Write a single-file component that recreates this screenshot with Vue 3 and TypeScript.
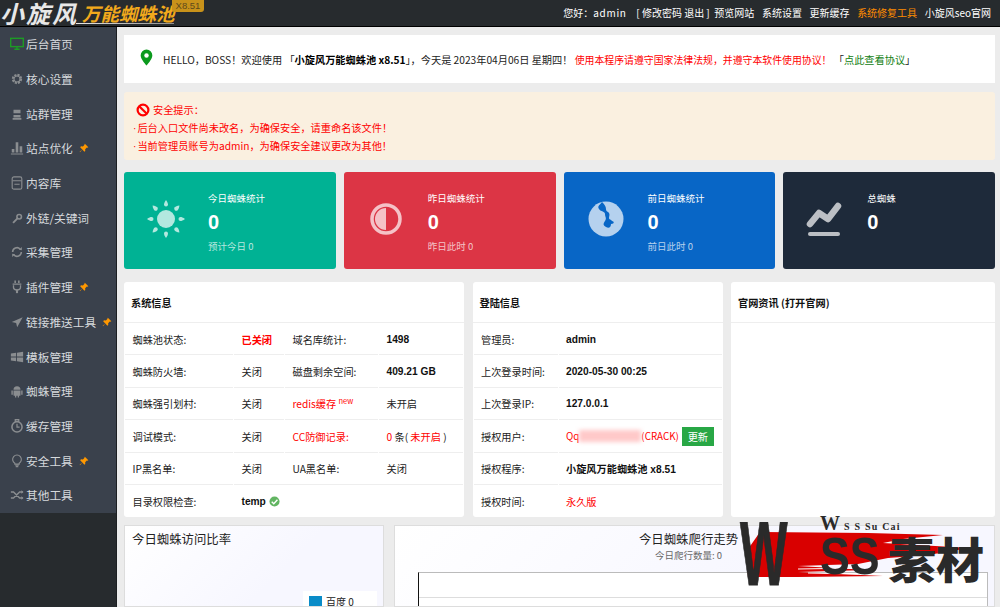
<script setup lang="ts">
interface MenuItem {
  label: string
  icon: string
  pin?: boolean
  active?: boolean
}

const menu: MenuItem[] = [
  { label: '后台首页', icon: 'monitor', active: true },
  { label: '核心设置', icon: 'gear' },
  { label: '站群管理', icon: 'server' },
  { label: '站点优化', icon: 'bars', pin: true },
  { label: '内容库', icon: 'doc' },
  { label: '外链/关键词', icon: 'key' },
  { label: '采集管理', icon: 'sync' },
  { label: '插件管理', icon: 'plug', pin: true },
  { label: '链接推送工具', icon: 'send', pin: true },
  { label: '模板管理', icon: 'windows' },
  { label: '蜘蛛管理', icon: 'android' },
  { label: '缓存管理', icon: 'clock' },
  { label: '安全工具', icon: 'bulb', pin: true },
  { label: '其他工具', icon: 'shuffle' },
]

const stats = [
  { cls: 'teal', title: '今日蜘蛛统计', sub: '预计今日 0', icon: 'sun' },
  { cls: 'red', title: '昨日蜘蛛统计', sub: '昨日此时 0', icon: 'half' },
  { cls: 'blue', title: '前日蜘蛛统计', sub: '前日此时 0', icon: 'globe' },
  { cls: 'dark', title: '总蜘蛛', sub: '', icon: 'trend' },
]

const sunRays = [0, 45, 90, 135, 180, 225, 270, 315]
</script>

<template>
  <div class="page">
    <header class="topbar">
      <div class="logo">
        <span class="logo-main">小旋风</span><span class="logo-sub">万能蜘蛛池</span>
        <span class="logo-ver">X8.51</span>
        <i class="logo-line"></i>
      </div>
      <nav class="topnav">
        <span class="hello">您好&#xFF1A;<em>admin</em></span>
        <span class="account">[ 修改密码 退出 ]</span>
        <a>预览网站</a>
        <a>系统设置</a>
        <a>更新缓存</a>
        <a class="orange">系统修复工具</a>
        <a>小旋风seo官网</a>
      </nav>
    </header>

    <div class="body">
      <aside class="sidebar">
        <ul class="menu">
          <li v-for="m in menu" :key="m.label">
            <svg class="micon" :class="{ on: m.active }" viewBox="0 0 16 16">
              <template v-if="m.icon === 'monitor'">
                <rect x="0.8" y="1.5" width="14.4" height="9.5" fill="none" stroke="currentColor" stroke-width="1.6" />
                <path d="M5 14h6M8 11v3" stroke="currentColor" stroke-width="1.6" fill="none" />
              </template>
              <template v-else-if="m.icon === 'gear'">
                <circle cx="8" cy="8" r="4.6" fill="none" stroke="currentColor" stroke-width="2.6" stroke-dasharray="2.4 1.2" />
                <circle cx="8" cy="8" r="3.4" fill="none" stroke="currentColor" stroke-width="1.2" />
              </template>
              <template v-else-if="m.icon === 'server'">
                <path d="M4 3h8v4H4zM4 9h8v3H4zM3 12.500h10v2H3z" fill="currentColor" />
              </template>
              <template v-else-if="m.icon === 'bars'">
                <path d="M2 9h3v4H2zM6.500 1.500h3V13h-3zM11 6h3v7h-3zM1 14.300h14v1H1z" fill="currentColor" />
              </template>
              <template v-else-if="m.icon === 'doc'">
                <rect x="2.5" y="1" width="11" height="14" rx="2" fill="none" stroke="currentColor" stroke-width="1.3" />
                <path d="M3 5.500h10M5 9.500h6" stroke="currentColor" stroke-width="1.2" />
              </template>
              <template v-else-if="m.icon === 'key'">
                <circle cx="10.500" cy="6.500" r="2.600" fill="none" stroke="currentColor" stroke-width="1.800" />
                <path d="M8.500 8.500l-5 5" stroke="currentColor" stroke-width="2.200" />
              </template>
              <template v-else-if="m.icon === 'sync'">
                <path d="M3 8a5 5 0 0 1 8.500-3.500M13 8a5 5 0 0 1-8.500 3.500" fill="none" stroke="currentColor" stroke-width="1.800" />
                <path d="M10 5.500l3.500 .5V2.200zM6 10.500l-3.500-.5v3.800z" fill="currentColor" />
              </template>
              <template v-else-if="m.icon === 'plug'">
                <path d="M5 .5h1.800v3H5zM9.200 .5H11v3H9.200zM3 4h10v1.500H3z" fill="currentColor" />
                <path d="M4 6v2.500a4 2.800 0 0 0 8 0V6" fill="none" stroke="currentColor" stroke-width="1.500" />
                <path d="M8 11v4" stroke="currentColor" stroke-width="2.400" />
              </template>
              <template v-else-if="m.icon === 'send'">
                <path d="M14.500 2.500L2 8l5 1.200L8.200 14z" fill="currentColor" />
              </template>
              <template v-else-if="m.icon === 'windows'">
                <path d="M1 4l6-.8V7.500H1zM8 3.100l7-1V7.500H8zM1 8.500h6v4.300L1 12zM8 8.500h7v5.400l-7-1z" fill="currentColor" />
              </template>
              <template v-else-if="m.icon === 'android'">
                <path d="M4 6.500a4 4 0 0 1 8 0zM4 7.300h8v5.200a1 1 0 0 1-1 1h-.7V15.500H8.800v-2H7.200v2H5.700v-2H5a1 1 0 0 1-1-1zM1.600 7.300h1.600v5H1.600zM12.800 7.300h1.600v5h-1.600z" fill="currentColor" />
              </template>
              <template v-else-if="m.icon === 'clock'">
                <circle cx="8" cy="9" r="5.800" fill="none" stroke="currentColor" stroke-width="1.800" />
                <path d="M6 .8h4v1.800H6zM8 5.500V9.300h3" fill="none" stroke="currentColor" stroke-width="1.400" />
              </template>
              <template v-else-if="m.icon === 'bulb'">
                <path d="M5.500 10.500a5 5 0 1 1 5 0v1h-5z" fill="none" stroke="currentColor" stroke-width="1.300" />
                <path d="M6 12.600h4M6.500 14.500h3" stroke="currentColor" stroke-width="1.400" />
              </template>
              <template v-else>
                <path d="M1 4.500h3l7 7h3.500M1 11.500h3l7-7h3.500" fill="none" stroke="currentColor" stroke-width="1.600" />
                <path d="M13 2.500l2.500 2-2.500 2zM13 9.500l2.500 2-2.500 2z" fill="currentColor" />
              </template>
            </svg>
            <span>{{ m.label }}</span>
            <svg v-if="m.pin" class="pin" viewBox="0 0 12 12">
              <path d="M7 .8l4.200 4.200-1.200.6-.6-.2-2 2 .1 2.200-1 1L4 7.900 1.200 11 .8 10.600 4 7.700 1.400 5l1-1 2.300 .2 2-2-.2-.7z" fill="#ff9800" />
            </svg>
          </li>
        </ul>
      </aside>

      <main class="main">
        <section class="welcome">
          <svg class="loc" viewBox="0 0 14 18">
            <path d="M7 .5a6.300 6.300 0 0 0-6.300 6.300C.7 11 7 17.500 7 17.500s6.300-6.500 6.300-10.700A6.300 6.300 0 0 0 7 .5z" fill="#0b9a1e" />
            <circle cx="7" cy="6.800" r="2.400" fill="#fff" />
          </svg>
          <p>
            HELLO&#xFF0C;BOSS&#xFF01;欢迎使用 &#x300C;<b>小旋风万能蜘蛛池 x8.51</b>&#x300D;&#xFF0C;今天是 2023年04月06日 星期四&#xFF01;
            <span class="txt-red wide">使用本程序请遵守国家法律法规&#xFF0C;并遵守本软件使用协议&#xFF01;</span>
            &#x300C;<span class="txt-green">点此查看协议</span>&#x300D;
          </p>
        </section>

        <section class="alert">
          <div class="alert-head">
            <svg viewBox="0 0 14 14" class="ban">
              <circle cx="7" cy="7" r="5.400" fill="none" stroke="#f00" stroke-width="2.200" />
              <path d="M3.200 3.200l7.600 7.600" stroke="#f00" stroke-width="2.200" />
            </svg>
            <span>安全提示&#xFF1A;</span>
          </div>
          <p><span class="dot">·</span>后台入口文件尚未改名&#xFF0C;为确保安全&#xFF0C;请重命名该文件&#xFF01;</p>
          <p><span class="dot">·</span>当前管理员账号为admin&#xFF0C;为确保安全建议更改为其他&#xFF01;</p>
        </section>

        <section class="stats">
          <div v-for="s in stats" :key="s.cls" class="stat" :class="s.cls">
            <div class="stat-icon">
              <svg viewBox="0 0 40 40">
                <template v-if="s.icon === 'sun'">
                  <circle cx="20" cy="20" r="9" fill="currentColor" />
                  <path
                    v-for="r in sunRays"
                    :key="r"
                    d="M20 1c1.500 2 2 3.500 2 4.500a2 2 0 0 1-4 0c0-1 .5-2.500 2-4.500z"
                    fill="currentColor"
                    :transform="`rotate(${r} 20 20)`"
                  />
                </template>
                <template v-else-if="s.icon === 'half'">
                  <circle cx="20" cy="20" r="14" fill="none" stroke="currentColor" stroke-width="3.500" />
                  <path d="M20 9a11 11 0 0 0 0 22z" fill="currentColor" />
                </template>
                <template v-else-if="s.icon === 'globe'">
                  <circle cx="20" cy="20" r="17.500" fill="currentColor" />
                  <path
                    d="M16 3c-2 3-5 4-3 7s6 2 6 5 2 4 0 7-2 4 1 6 5 0 5-3c4 0 3-3 1-3-1-2-3-1-3-3s1-3 0-5-3-1-3-4-2-5-4-7z"
                    fill="#0866c6"
                  />
                </template>
                <template v-else>
                  <path
                    d="M5 25l9-11 9 6 10-13"
                    fill="none"
                    stroke="currentColor"
                    stroke-width="6.500"
                    stroke-linecap="round"
                    stroke-linejoin="round"
                  />
                  <path d="M5 35h28" stroke="currentColor" stroke-width="4" stroke-linecap="round" />
                </template>
              </svg>
            </div>
            <div class="stat-text">
              <div class="stat-title">{{ s.title }}</div>
              <div class="stat-num">0</div>
              <div class="stat-sub">{{ s.sub }}</div>
            </div>
          </div>
        </section>

        <section class="tables">
          <div class="panel">
            <h3>系统信息</h3>
            <table class="sys">
              <tbody>
                <tr>
                  <td>蜘蛛池状态:</td><td class="txt-red fat">已关闭</td>
                  <td>域名库统计:</td><td class="strong">1498</td>
                </tr>
                <tr>
                  <td>蜘蛛防火墙:</td><td>关闭</td>
                  <td>磁盘剩余空间:</td><td class="strong">409.21 GB</td>
                </tr>
                <tr>
                  <td>蜘蛛强引划村:</td><td>关闭</td>
                  <td class="txt-red">redis缓存 <sup>new</sup></td><td>未开启</td>
                </tr>
                <tr>
                  <td>调试模式:</td><td>关闭</td>
                  <td class="txt-red">CC防御记录:</td>
                  <td><span class="txt-red">0</span> 条( <span class="txt-red">未开启</span> )</td>
                </tr>
                <tr>
                  <td>IP黑名单:</td><td>关闭</td>
                  <td>UA黑名单:</td><td>关闭</td>
                </tr>
                <tr>
                  <td>目录权限检查:</td>
                  <td colspan="3" class="strong">
                    temp
                    <svg class="ok" viewBox="0 0 12 12">
                      <circle cx="6" cy="6" r="5.500" fill="#62b562" />
                      <path d="M3 6.200l2.200 2.200L9.200 4" fill="none" stroke="#fff" stroke-width="1.500" />
                    </svg>
                  </td>
                </tr>
              </tbody>
            </table>
          </div>

          <div class="panel">
            <h3>登陆信息</h3>
            <table class="login">
              <tbody>
                <tr><td>管理员:</td><td class="strong">admin</td></tr>
                <tr><td>上次登录时间:</td><td class="strong">2020-05-30 00:25</td></tr>
                <tr><td>上次登录IP:</td><td class="strong">127.0.0.1</td></tr>
                <tr>
                  <td>授权用户:</td>
                  <td>
                    <div class="licence">
                      <span class="txt-red user">Qq<i class="smear"></i>(CRACK)</span>
                      <button class="update">更新</button>
                    </div>
                  </td>
                </tr>
                <tr><td>授权程序:</td><td class="strong">小旋风万能蜘蛛池 x8.51</td></tr>
                <tr><td>授权时间:</td><td class="txt-red">永久版</td></tr>
              </tbody>
            </table>
          </div>

          <div class="panel">
            <h3>官网资讯 (打开官网)</h3>
          </div>
        </section>

        <section class="charts">
          <div class="chart left">
            <h4>今日蜘蛛访问比率</h4>
            <div class="legend"><i></i>百度 0</div>
          </div>
          <div class="chart right">
            <h4>今日蜘蛛爬行走势</h4>
            <div class="chart-sub">今日爬行数量: 0</div>
            <div class="plot"><div class="gridline"></div></div>
          </div>
        </section>
      </main>
    </div>

    <div class="watermark">
      <svg class="brush" viewBox="0 0 252 80">
        <path
          d="M22 20L130 21L205 23L165 27L145 31L232 36L190 43L150 46L120 52L60 54L130 58L60 60L145 64L60 65L10 65L8 40Z"
          fill="#d90000"
        />
        <path d="M60 57l62 -1M70 61l50 1" stroke="#fff" stroke-width="1" />
      </svg>
      <span class="wm-top">W<small>S S Su Cai</small></span>
      <span class="wm-w">W</span>
      <span class="wm-ss">SS</span>
      <span class="wm-cn">素材</span>
    </div>
  </div>
</template>

<style scoped>
.page {
  position: relative;
  width: 1000px;
  height: 607px;
  overflow: hidden;
  display: flex;
  flex-direction: column;
  font-family: "Noto Sans CJK SC", "Liberation Sans", sans-serif;
  font-size: 10px;
  color: #222;
  background: #ececec;
}
.topbar {
  flex: 0 0 27px;
  height: 27px;
  box-sizing: border-box;
  border-bottom: 1px solid #000;
  background: #272b2e;
  display: flex;
  justify-content: space-between;
  align-items: center;
  color: #fff;
  padding-right: 9px;
}
.logo {
  position: relative;
  display: flex;
  align-items: center;
  height: 26px;
  width: 210px;
  font-style: italic;
  font-weight: 700;
}
.logo-main {
  font-size: 24px;
  line-height: 26px;
  width: 82px;
  color: #e8e8e8;
  letter-spacing: 2px;
}
.logo-sub {
  font-size: 18.500px;
  line-height: 24px;
  color: #f2a91c;
  white-space: nowrap;
}
.logo-ver {
  position: absolute;
  left: 172px;
  top: 0;
  width: 32px;
  height: 12px;
  line-height: 12px;
  background: #c8921a;
  border-radius: 0 0 3px 3px;
  color: #5e4a1c;
  font-size: 9.500px;
  font-weight: 400;
  font-style: normal;
  text-align: center;
  font-family: "Liberation Sans", sans-serif;
}
.logo-line {
  position: absolute;
  left: 76px;
  bottom: 2px;
  width: 98px;
  height: 1px;
  background: linear-gradient(90deg, #e8e8e8, #8c8c8c);
}
.topnav {
  display: flex;
  align-items: center;
  gap: 7.600px;
  line-height: 26px;
  white-space: nowrap;
}
.hello {
  margin-right: 2px;
}
.hello em {
  font-style: normal;
  letter-spacing: 0.700px;
}
.account {
  margin-right: -3px;
}
.orange {
  color: #ff8c00;
}
.body {
  flex: 1;
  display: flex;
  min-height: 0;
}
.sidebar {
  flex: 0 0 116px;
  background: #272b2e;
  border-right: 1px solid #1c1f22;
}
.menu {
  margin: 0;
  padding: 0;
  list-style: none;
  background: #3a414c;
}
.menu li {
  height: 34.700px;
  display: flex;
  align-items: center;
  padding-left: 10px;
  color: #d6d9dc;
  font-size: 11.700px;
  white-space: nowrap;
}
.menu li > span {
  margin-top: -1px;
}
.micon {
  width: 14px;
  height: 14px;
  margin-right: 2px;
  color: #8a8d90;
  flex: none;
}
.micon.on {
  color: #1d9b25;
}
.pin {
  width: 10px;
  height: 10px;
  margin-left: 6px;
  flex: none;
}
.main {
  flex: 1;
  min-width: 0;
  padding: 8px 5px 0 7px;
  display: flex;
  flex-direction: column;
}
.welcome {
  height: 48px;
  flex: none;
  background: #fff;
  display: flex;
  align-items: center;
  padding-left: 16px;
  box-sizing: border-box;
  white-space: nowrap;
}
.welcome p {
  margin: 0 0 0 10px;
  font-size: 10.200px;
  color: #222;
}
.welcome b {
  color: #000;
}
.loc {
  width: 13px;
  height: 17px;
  flex: none;
  margin-top: -4px;
}
.txt-red {
  color: #f00;
}
.wide {
  font-size: 9.900px;
}
.txt-green {
  color: #128012;
}
.alert {
  margin-top: 9px;
  height: 68px;
  flex: none;
  box-sizing: border-box;
  background: #faf0e0;
  border-radius: 3px;
  padding: 9px 0 0 9px;
  color: #f00;
  font-size: 10.200px;
  line-height: 17px;
}
.alert p {
  margin: 0;
}
.dot {
  font-family: "Liberation Sans", sans-serif;
  margin-right: 1px;
}
.alert-head {
  display: flex;
  align-items: center;
  gap: 3px;
  padding-left: 3px;
  margin-bottom: 1px;
}
.ban {
  width: 14px;
  height: 14px;
}
.stats {
  margin-top: 12px;
  flex: none;
  display: grid;
  grid-template-columns: repeat(4, 1fr);
  gap: 8px;
}
.stat {
  height: 97px;
  border-radius: 3px;
  display: flex;
  align-items: flex-start;
  color: #fff;
}
.teal {
  background: #00b294;
}
.red {
  background: #dc3545;
}
.blue {
  background: #0866c6;
}
.dark {
  background: #1e2a3a;
}
.stat-icon {
  width: 84px;
  height: 97px;
  flex: none;
  display: flex;
  align-items: center;
  justify-content: center;
  color: rgba(255, 255, 255, 0.7);
  padding-bottom: 4px;
  box-sizing: border-box;
}
.stat-icon svg {
  width: 40px;
  height: 40px;
}
.stat-text {
  padding-top: 20px;
}
.stat-title {
  font-size: 9.500px;
  line-height: 13px;
}
.stat-num {
  font-family: "Liberation Sans", sans-serif;
  font-size: 20px;
  font-weight: 700;
  line-height: 25px;
  margin-top: 5px;
}
.stat-sub {
  font-size: 9.500px;
  line-height: 13px;
  margin-top: 5px;
  color: rgba(255, 255, 255, 0.72);
}
.tables {
  margin-top: 13px;
  flex: none;
  display: grid;
  grid-template-columns: 340px 250px 264px;
  gap: 8.500px;
}
.panel {
  height: 235px;
  background: #fff;
  border-radius: 3px;
  overflow: hidden;
}
.panel h3 {
  margin: 0;
  height: 41px;
  line-height: 41px;
  padding-left: 7px;
  font-size: 10.200px;
  font-weight: 700;
  color: #111;
  box-sizing: border-box;
  border-bottom: 1px solid #eee;
}
table {
  width: 100%;
  table-layout: fixed;
  border-collapse: separate;
  border-spacing: 1px 0;
  margin-top: -1px;
}
td {
  height: 32.400px;
  padding: 1px 0 0 7.500px;
  box-sizing: border-box;
  border-top: 1px solid #eee;
  font-size: 10.200px;
  white-space: nowrap;
}
.sys td:nth-child(1) {
  width: 108px;
}
.sys td:nth-child(2) {
  width: 50px;
}
.sys td:nth-child(3) {
  width: 93px;
}
.login td:nth-child(1) {
  width: 84px;
}
.strong {
  font-weight: 700;
  font-family: "Liberation Sans", "Noto Sans CJK SC", sans-serif;
  color: #111;
}
.fat {
  font-weight: 700;
}
sup {
  font-size: 7.500px;
  line-height: 0;
}
.ok {
  width: 11px;
  height: 11px;
  vertical-align: -2px;
}
.licence {
  display: flex;
  align-items: center;
  gap: 3px;
}
.user {
  position: relative;
  display: inline-flex;
  align-items: center;
  font-size: 9.800px;
}
.smear {
  display: block;
  width: 62px;
  height: 12px;
  background: #ffc9c9;
  filter: blur(2px);
}
.update {
  border: 0;
  width: 32px;
  height: 19px;
  padding: 0;
  background: #28a745;
  color: #fff;
  font-family: inherit;
  font-size: 10.200px;
}
.charts {
  margin-top: 8px;
  flex: 1;
  min-height: 0;
  display: flex;
  gap: 10px;
}
.chart {
  position: relative;
  box-sizing: border-box;
  border: 1px solid #ddd;
  background: linear-gradient(135deg, #fff 0%, #f7f7ff 60%);
  overflow: hidden;
}
.chart h4 {
  margin: 0;
  font-weight: 400;
  font-size: 12.400px;
  line-height: 16px;
  color: #222;
}
.left {
  flex: 0 0 260px;
  padding: 5px 0 0 7px;
}
.legend {
  position: absolute;
  left: 178px;
  top: 65px;
  width: 74px;
  height: 30px;
  background: #fff;
  display: flex;
  align-items: flex-start;
  gap: 4px;
  padding: 5px 0 0 6px;
  box-sizing: border-box;
  line-height: 12px;
}
.legend i {
  width: 13px;
  height: 11px;
  background: #0a8cc8;
}
.right {
  flex: 0 0 601px;
  padding: 5px 12px 0 0;
  text-align: center;
}
.chart-sub {
  font-size: 9.500px;
  line-height: 12px;
  color: #666;
  margin-top: 2px;
}
.plot {
  position: absolute;
  left: 23px;
  top: 46px;
  width: 570px;
  height: 60px;
  box-sizing: border-box;
  background: #fff;
  border-top: 1px solid #bbb;
  border-left: 1px solid #111;
  border-right: 1px solid #bbb;
}
.gridline {
  margin-top: 24px;
  border-top: 1px solid #ddd;
}
.watermark {
  position: absolute;
  left: 738px;
  top: 512px;
  width: 252px;
  height: 80px;
  color: #2a2a2a;
}
.brush {
  position: absolute;
  left: 0;
  top: 0;
  width: 252px;
  height: 80px;
}
.wm-top {
  position: absolute;
  left: 82px;
  top: 1px;
  font-family: "Liberation Serif", serif;
  font-weight: 700;
  font-size: 20px;
  line-height: 20px;
  white-space: nowrap;
}
.wm-top small {
  font-size: 10px;
  margin-left: 4px;
  letter-spacing: 1.200px;
}
.wm-w {
  position: absolute;
  left: 2px;
  top: 2px;
  font-family: "Liberation Sans", sans-serif;
  font-weight: 700;
  font-size: 90px;
  line-height: 80px;
  -webkit-text-stroke: 1px #2a2a2a;
  transform: scaleX(0.56);
  transform-origin: left top;
}
.wm-ss {
  position: absolute;
  left: 82px;
  top: 14px;
  font-family: "Liberation Sans", sans-serif;
  font-weight: 700;
  font-size: 52px;
  line-height: 60px;
  white-space: nowrap;
  transform: scaleX(0.86);
  transform-origin: left top;
}
.wm-cn {
  position: absolute;
  left: 150px;
  top: 20px;
  font-weight: 900;
  font-size: 48px;
  line-height: 50px;
  white-space: nowrap;
}
</style>

<style>
html,
body {
  margin: 0;
  background: #ececec;
}
</style>
